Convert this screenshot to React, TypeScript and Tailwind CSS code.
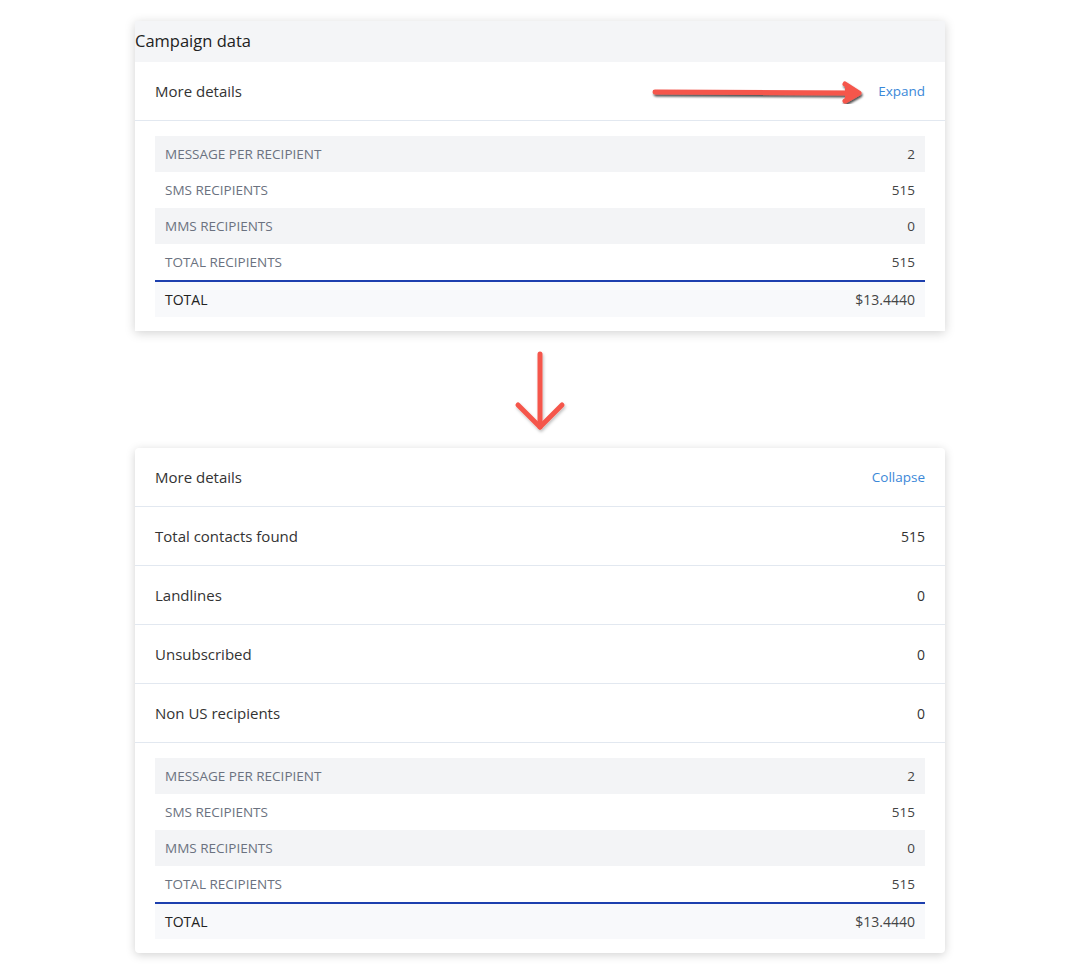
import React from 'react';

const summary = [
  { label: 'MESSAGE PER RECIPIENT', value: '2' },
  { label: 'SMS RECIPIENTS', value: '515' },
  { label: 'MMS RECIPIENTS', value: '0' },
  { label: 'TOTAL RECIPIENTS', value: '515' },
];

const details = [
  { label: 'Total contacts found', value: '515' },
  { label: 'Landlines', value: '0' },
  { label: 'Unsubscribed', value: '0' },
  { label: 'Non US recipients', value: '0' },
];

const SummaryTable: React.FC = () => (
  <div className="px-5 pt-[15px] pb-[14px]">
    {summary.map((row, i) => (
      <div
        key={row.label}
        className={`flex h-9 items-center justify-between px-2.5 text-[13.5px] ${i % 2 === 0 ? 'bg-[#f3f4f6]' : 'bg-white'}`}
      >
        <span className="text-[#6b7280]">{row.label}</span>
        <span className="text-[#444]">{row.value}</span>
      </div>
    ))}
    <div className="h-[2px] bg-[#1d3fae]" />
    <div className="flex h-[35px] items-center justify-between bg-[#f8f9fb] px-2.5 text-[14px] text-[#222]">
      <span>TOTAL</span>
      <span className="text-[#444]">$13.4440</span>
    </div>
  </div>
);

const DetailsHeader: React.FC<{ action: string; children?: React.ReactNode }> = ({ action, children }) => (
  <div className="relative flex h-[59px] items-center justify-between border-b border-[#e2e8f0] px-5">
    <span className="text-[15px] text-[#333]">More details</span>
    <span className="text-[13.5px] text-[#3b88d8]">{action}</span>
    {children}
  </div>
);

export default function App() {
  return (
    <div className="min-h-[964px] bg-white pt-[21px] font-['Open_Sans',sans-serif]">
      {/* Collapsed card */}
      <div className="mx-auto w-[810px] bg-white shadow-[0_2px_10px_rgba(0,0,0,0.18)]">
        <div className="flex h-[41px] items-center bg-[#f4f5f7] text-[16.5px] text-[#222]">Campaign data</div>
        <div className="rounded-tl-md bg-white">
          <DetailsHeader action="Expand">
            <svg className="absolute left-[512px] top-[18px]" width="222" height="24" viewBox="0 0 222 24">
              <defs>
                <filter id="sh" x="-10%" y="-50%" width="120%" height="200%">
                  <feDropShadow dx="1" dy="2" stdDeviation="1.2" floodColor="#000" floodOpacity="0.7" />
                </filter>
              </defs>
              <g filter="url(#sh)" stroke="#f5564c" strokeWidth="5" strokeLinecap="round" strokeLinejoin="round" fill="none">
                <path d="M8 12 L210 13" />
                <path d="M198 4 L212 13 L198 21" fill="#f5564c" />
              </g>
            </svg>
          </DetailsHeader>
          <SummaryTable />
        </div>
      </div>

      {/* Down arrow */}
      <div className="flex h-[117px] items-center justify-center">
        <svg width="60" height="92" viewBox="0 0 60 92">
          <defs>
            <filter id="sh2" x="-50%" y="-20%" width="200%" height="140%">
              <feDropShadow dx="1" dy="2" stdDeviation="1.5" floodColor="#000" floodOpacity="0.25" />
            </filter>
          </defs>
          <g filter="url(#sh2)" stroke="#f5564c" strokeWidth="5" strokeLinecap="round" strokeLinejoin="round" fill="none">
            <path d="M30 10 L30 83" />
            <path d="M8 61 L30 83 L52 61" />
          </g>
        </svg>
      </div>

      {/* Expanded card */}
      <div className="mx-auto w-[810px] rounded-sm bg-white shadow-[0_2px_10px_rgba(0,0,0,0.18)]">
        <DetailsHeader action="Collapse" />
        {details.map((row) => (
          <div
            key={row.label}
            className="flex h-[59px] items-center justify-between border-b border-[#e2e8f0] px-5 text-[15px] text-[#333]"
          >
            <span>{row.label}</span>
            <span className="text-[14px]">{row.value}</span>
          </div>
        ))}
        <SummaryTable />
      </div>
    </div>
  );
}
